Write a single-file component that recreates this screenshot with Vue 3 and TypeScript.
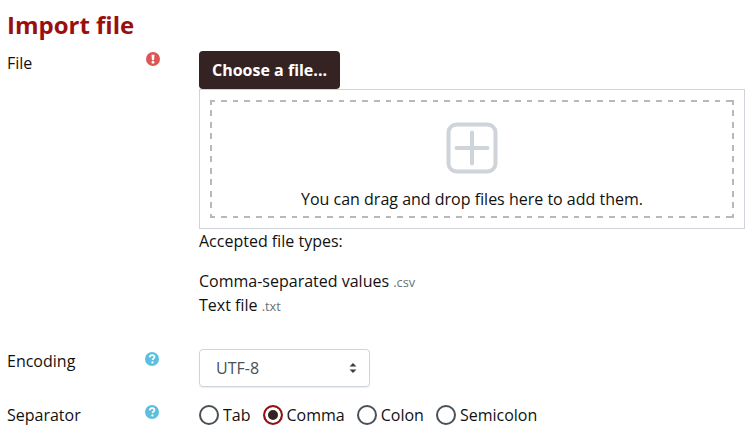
<script setup lang="ts">
const separators = [
  { label: 'Tab', checked: false },
  { label: 'Comma', checked: true },
  { label: 'Colon', checked: false },
  { label: 'Semicolon', checked: false },
]

const fileTypes = [
  { name: 'Comma-separated values', ext: '.csv' },
  { name: 'Text file', ext: '.txt' },
]
</script>

<template>
  <main class="page">
    <h2 class="title">Import file</h2>

    <div class="row row-file">
      <label class="label">File</label>
      <span class="hint">
        <svg viewBox="0 0 16 16" width="14" height="14">
          <circle cx="8" cy="8" r="8" fill="#dc5754" />
          <path d="M6.3 3h3.4l-.5 6.4H6.8z" fill="#fff" />
          <circle cx="8" cy="11.8" r="1.6" fill="#fff" />
        </svg>
      </span>
      <div class="control">
        <button class="choose" type="button">Choose a file...</button>
        <div class="dropbox">
          <div class="dropzone">
            <svg class="plus" viewBox="0 0 52 52" width="52" height="52">
              <rect x="2.5" y="2.5" width="47" height="47" rx="8" fill="none" stroke="#ced4da" stroke-width="4" />
              <path d="M10.5 26h31M26 10.5v31" fill="none" stroke="#ced4da" stroke-width="4" stroke-linecap="round" />
            </svg>
            <span>You can drag and drop files here to add them.</span>
          </div>
        </div>
        <p class="accepted">Accepted file types:</p>
        <ul class="types">
          <li v-for="t in fileTypes" :key="t.ext">
            {{ t.name }} <small>{{ t.ext }}</small>
          </li>
        </ul>
      </div>
    </div>

    <div class="row row-encoding">
      <label class="label">Encoding</label>
      <span class="hint">
        <svg viewBox="0 0 16 16" width="14" height="14">
          <circle cx="8" cy="8" r="8" fill="#5bc0de" />
          <path d="M5.4 6.1C5.5 4.6 6.6 3.6 8.2 3.6c1.5 0 2.6 .9 2.6 2.2 0 1-.5 1.5-1.3 2-.7.4-.9.7-.9 1.4" fill="none" stroke="#fff" stroke-width="1.9" />
          <circle cx="8.5" cy="11.9" r="1.3" fill="#fff" />
        </svg>
      </span>
      <div class="select">
        <span>UTF-8</span>
        <svg viewBox="0 0 8 12" width="8" height="12">
          <path d="M4 1l3.4 3.6H.6zM4 11L.6 7.4h6.8z" fill="#343a40" />
        </svg>
      </div>
    </div>

    <div class="row row-separator">
      <label class="label">Separator</label>
      <span class="hint">
        <svg viewBox="0 0 16 16" width="14" height="14">
          <circle cx="8" cy="8" r="8" fill="#5bc0de" />
          <path d="M5.4 6.1C5.5 4.6 6.6 3.6 8.2 3.6c1.5 0 2.6 .9 2.6 2.2 0 1-.5 1.5-1.3 2-.7.4-.9.7-.9 1.4" fill="none" stroke="#fff" stroke-width="1.9" />
          <circle cx="8.5" cy="11.9" r="1.3" fill="#fff" />
        </svg>
      </span>
      <div class="radios">
        <span v-for="s in separators" :key="s.label" class="radio">
          <i class="dot" :class="{ on: s.checked }"></i>{{ s.label }}
        </span>
      </div>
    </div>
  </main>
</template>

<style>
html, body {
  background: #fff;
  overflow: hidden;
}
</style>

<style scoped>
.page {
  padding: 10px 6px 0 7px;
  font-family: "Open Sans", sans-serif;
  font-size: 16px;
  line-height: 24px;
  color: #111;
  height: 438px;
  box-sizing: border-box;
  overflow: hidden;
}

.title {
  margin: 0 0 12px;
  font-size: 24px;
  line-height: 29px;
  font-weight: 700;
  color: #990f0f;
}

.row {
  display: grid;
  grid-template-columns: 138px 54px 1fr;
  align-items: start;
}

.choose {
  display: block;
  height: 38px;
  width: 141px;
  padding: 0;
  border: 0;
  border-radius: 4px;
  background: #352323;
  color: #fff;
  font: 700 16px/24px "Open Sans", sans-serif;
}

.dropbox {
  box-sizing: border-box;
  height: 140px;
  padding: 10px;
  border: 1px solid #ced4da;
}

/* chrome's own 2px dashed is too tight, the dashes here are 6 on 6 off */
.dropzone {
  --dash-x: repeating-linear-gradient(90deg, #b8b8b8 0 5px, transparent 5px 11px, #b8b8b8 11px 11.75px);
  --dash-y: repeating-linear-gradient(180deg, #b8b8b8 0 5px, transparent 5px 10.5px, #b8b8b8 10.5px 11.5px);
  box-sizing: border-box;
  height: 118px;
  padding: 2px;
  background:
    var(--dash-x) left top / 100% 2px no-repeat,
    var(--dash-x) left bottom / 100% 2px no-repeat,
    var(--dash-y) left top / 2px 100% no-repeat,
    var(--dash-y) right top / 2px 100% no-repeat;
  display: flex;
  flex-direction: column;
  align-items: center;
}

.plus {
  margin-top: 20px;
  margin-bottom: 13px;
}

.accepted {
  margin: 0;
}

.types {
  list-style: none;
  margin: 16px 0 0;
  padding: 0;
}

.types small {
  font-size: 12.8px;
  line-height: 1;
  color: #6a737b;
}

.row-file {
  height: 298px;
}

.row-file .hint {
  display: flex;
  padding: 1px 0 0 1px;
}

.row-encoding {
  height: 50px;
}

.row-encoding .hint {
  display: flex;
  padding-top: 3px;
}

.select {
  box-sizing: border-box;
  width: 171px;
  height: 38px;
  padding: 0 16px;
  display: flex;
  align-items: center;
  justify-content: space-between;
  border: 1px solid #ced4da;
  border-radius: 4px;
  box-shadow: 0 1px 1px rgba(0, 0, 0, 0.08);
  color: #495057;
}

.select svg {
  margin-right: -4px;
}

.row-separator .label {
  padding-top: 4px;
}

.row-separator .hint {
  display: flex;
  padding-top: 6px;
}

.radios {
  display: flex;
  gap: 12px;
  padding-top: 4px;
}

.radio {
  display: flex;
  align-items: center;
  gap: 4px;
}

.dot {
  box-sizing: border-box;
  width: 20px;
  height: 20px;
  border: 2px solid #495057;
  border-radius: 50%;
  background: #fff;
}

.dot.on {
  border-color: #990f0f;
  background: #352323;
  box-shadow: inset 0 0 0 3px #fff;
}
</style>
